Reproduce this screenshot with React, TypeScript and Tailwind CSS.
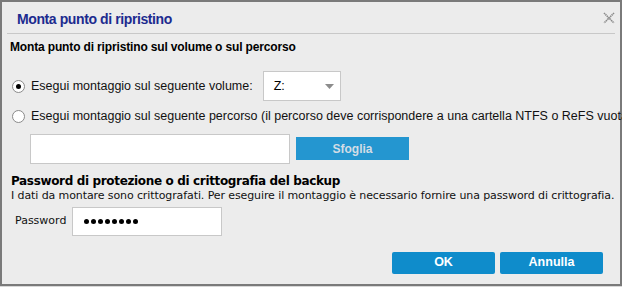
import React from "react";

const arial = { fontFamily: '"Liberation Sans", Arial, sans-serif' };
const tahoma = { fontFamily: '"DejaVu Sans", Verdana, sans-serif' };

function Radio({ checked }: { checked?: boolean }) {
  return (
    <span className="flex h-[13px] w-[13px] shrink-0 items-center justify-center rounded-full border border-[#8a8a8a] bg-white">
      {checked && <span className="h-[5px] w-[5px] rounded-full bg-black" />}
    </span>
  );
}

export default function App() {
  return (
    <div className="h-[287px] w-[622px] overflow-hidden bg-[#d8d8d8]">
      <div className="flex h-[286px] w-[622px] flex-col border-2 border-[#7a7a7a] bg-[#ececec] text-black">
        <div className="flex h-[31px] items-start justify-between pl-[15px] pr-[4px] pt-[7px]" style={arial}>
          <span className="text-[14px] font-bold tracking-[-0.4px] text-[#1d2b8f]">Monta punto di ripristino</span>
          <svg width="14" height="14" viewBox="0 0 14 14" className="mt-[2px]">
            <path d="M2 2 L12 12 M12 2 L2 12" stroke="#8a8a8a" strokeWidth="1.6" strokeDasharray="1.4 0.6" />
          </svg>
        </div>
        <div className="mx-[5px] h-px w-[608px] bg-[#c8c8c8]" />
        <div className="pl-[8px] pt-[6px] text-[12px] font-bold leading-[14px] tracking-[-0.15px]" style={arial}>
          Monta punto di ripristino sul volume o sul percorso
        </div>
        <div className="mt-[17px] flex h-[30px] items-center pl-[10px]" style={arial}>
          <Radio checked />
          <span className="ml-[6px] text-[12.5px] text-[#111]">Esegui montaggio sul seguente volume:</span>
          <div className="ml-[10px] flex h-[30px] w-[78px] items-center justify-between border border-[#c8c8c8] bg-white pl-[10px] pr-[6px]">
            <span className="text-[12.5px]">Z:</span>
            <svg width="9" height="5" viewBox="0 0 9 5">
              <path d="M0 0 H9 L4.5 5 Z" fill="#8c8c8c" />
            </svg>
          </div>
        </div>
        <div className="mt-[6px] flex items-center whitespace-nowrap pl-[10px]" style={arial}>
          <Radio />
          <span className="ml-[6px] text-[12.5px] text-[#111]">
            Esegui montaggio sul seguente percorso (il percorso deve corrispondere a una cartella NTFS o ReFS vuota)
          </span>
        </div>
        <div className="mt-[8px] flex items-center pl-[28px]">
          <div className="h-[30px] w-[260px] border border-[#c8c8c8] bg-white" />
          <div
            className="ml-[6px] flex h-[23px] w-[113px] items-center justify-center bg-[#2496d0] text-[12px] font-bold text-[#d2dde6]"
            style={arial}
          >
            Sfoglia
          </div>
        </div>
        <div className="mt-[10px] pl-[9px] text-[12px] font-bold leading-[15px] tracking-[-0.35px]" style={tahoma}>
          Password di protezione o di crittografia del backup
        </div>
        <div className="whitespace-nowrap pl-[9px] text-[11px] leading-[13px] tracking-[-0.1px] text-[#111]" style={tahoma}>
          I dati da montare sono crittografati. Per eseguire il montaggio è necessario fornire una password di crittografia.
        </div>
        <div className="mt-[5px] flex items-center pl-[13px]" style={tahoma}>
          <span className="text-[11px] text-[#111]">Password</span>
          <div className="ml-[6px] flex h-[29px] w-[150px] items-center gap-[2px] border border-[#c8c8c8] bg-white pl-[11px]">
            {[0, 1, 2, 3, 4, 5, 6, 7].map((i) => (
              <span key={i} className="h-[5px] w-[5px] rounded-full bg-black" />
            ))}
          </div>
        </div>
        <div className="mt-[16px] flex justify-end gap-[5px] pr-[17px]" style={arial}>
          <div className="flex h-[22px] w-[103px] items-center justify-center rounded-[2px] bg-[#0f8ccb] text-[12.5px] font-bold text-white">
            OK
          </div>
          <div className="flex h-[22px] w-[103px] items-center justify-center rounded-[2px] bg-[#0f8ccb] text-[12.5px] font-bold text-white">
            Annulla
          </div>
        </div>
      </div>
    </div>
  );
}
